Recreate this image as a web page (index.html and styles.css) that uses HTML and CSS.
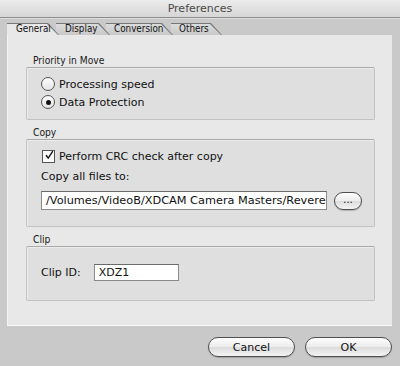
FILE: index.html
```html
<!DOCTYPE html>
<html lang="en">
<head>
  <meta charset="UTF-8" />
  <title>Preferences</title>
  <link rel="stylesheet" href="styles.css">
</head>
<body>
  <div class="window">
    <div class="titlebar">Preferences</div>

    <div class="tabs">
      <div class="tab active"><span>General</span></div>
      <div class="tab t2"><span>Display</span></div>
      <div class="tab t3"><span>Conversion</span></div>
      <div class="tab t4"><span>Others</span></div>
    </div>

    <div class="panel">
      <div class="group">
        <div class="group-label">Priority in Move</div>
        <div class="box box-priority">
          <label class="row">
            <span class="radio"></span> Processing speed
          </label>
          <label class="row">
            <span class="radio on"></span> Data Protection
          </label>
        </div>
      </div>

      <div class="group">
        <div class="group-label">Copy</div>
        <div class="box box-copy">
          <label class="row">
            <span class="check">
              <svg width="13" height="13" viewBox="0 0 13 13">
                <path d="M3 6.5 L5.5 10 L11 1.5" fill="none" stroke="#111" stroke-width="1.8" stroke-linecap="round" stroke-linejoin="round"/>
              </svg>
            </span>
            Perform CRC check after copy
          </label>
          <div class="plain">Copy all files to:</div>
          <div class="path-row">
            <div class="field path">/Volumes/VideoB/XDCAM Camera Masters/Reverend</div>
            <button class="pill small">...</button>
          </div>
        </div>
      </div>

      <div class="group">
        <div class="group-label">Clip</div>
        <div class="box box-clip">
          <div class="clip-row">
            <span>Clip ID:</span>
            <div class="field clip">XDZ1</div>
          </div>
        </div>
      </div>
    </div>

    <div class="actions">
      <button class="pill">Cancel</button>
      <button class="pill">OK</button>
    </div>
  </div>
</body>
</html>
```

FILE: styles.css
```css
* { margin: 0; padding: 0; box-sizing: border-box; }
body {
  width: 400px; height: 366px; overflow: hidden;
  background: #c9c9c9;
  font-family: "DejaVu Sans", "Liberation Sans", sans-serif;
  color: #111;
}

.window { display: flex; flex-direction: column; height: 366px; }

.titlebar {
  height: 18px;
  background: linear-gradient(#ececec, #d6d6d6);
  border-bottom: 1px solid #8e8e8e;
  box-shadow: 0 1px 0 #dcdcdc;
  text-align: center;
  font-size: 11px; line-height: 17px;
  color: #4a4a4a;
}

/* tabs */
.tabs { display: flex; padding: 5px 0 0 7px; height: 17px; }
.tab {
  position: relative;
  height: 12px;
  background: #777;
  clip-path: polygon(0 0, calc(100% - 11px) 0, 100% 100%, 0 100%);
  font-family: "DejaVu Sans Condensed", "DejaVu Sans", sans-serif;
  font-size: 9.8px; line-height: 12px;
  padding-left: 8px;
  white-space: nowrap;
}
.tab::before {
  content: '';
  position: absolute; top: 1px; left: 0; right: 1px; bottom: 0;
  background: linear-gradient(#dcdcdc, #c8c8c8);
  clip-path: polygon(0 0, calc(100% - 11px) 0, 100% 100%, 0 100%);
}
.tab span { position: relative; }
.tab.active { z-index: 4; width: 52px; padding-left: 9px; }
.tab.active::before { background: #e8e8e8; }
.tab.t2 { z-index: 3; margin-left: -3px; width: 54px; padding-left: 9px; }
.tab.t3 { z-index: 2; margin-left: -4px; width: 67px; }
.tab.t4 { z-index: 1; margin-left: -2px; width: 51px; }

/* panel */
.panel {
  margin: 0 8px 0 7px;
  height: 291px;
  background: #e8e8e8;
  border-bottom: 1px solid #fafafa;
  border-left: 1px solid #f4f4f4;
  padding: 20px 17px 0 18px;
  display: flex; flex-direction: column; gap: 7px;
}

.group-label {
  font-family: "DejaVu Sans Condensed", "DejaVu Sans", sans-serif;
  font-size: 10.2px; line-height: 12px;
  padding-left: 7px;
  color: #1a1a1a;
}

.box {
  background: #dfdfdf;
  border: 1px solid #c2c2c2;
  border-top-color: #a9a9a9;
  border-radius: 2px;
  box-shadow: inset 1px 1px 0 #ececec;
  padding-left: 14px;
  font-size: 11px;
}
.box-priority { height: 53px; padding-top: 7px; }
.box-copy { height: 88px; padding-top: 7px; }
.box-clip { height: 55px; padding-top: 17px; }

.row {
  display: flex; align-items: center; gap: 4px;
  height: 18px;
}

.radio {
  width: 14px; height: 14px; border-radius: 50%;
  border: 1px solid #555;
  background: linear-gradient(#fdfdfd, #e4e4e4);
  display: flex; align-items: center; justify-content: center;
}
.radio.on::after {
  content: ''; width: 5px; height: 5px; border-radius: 50%; background: #111;
}

.check {
  width: 13px; height: 13px;
  border: 1px solid #555;
  background: #fcfcfc;
  display: flex; align-items: center; justify-content: center;
  margin-left: 1px;
}
.check svg { margin-top: -2px; margin-left: 1px; }

.plain { margin-top: 4px; height: 16px; line-height: 16px; }

.path-row { display: flex; align-items: center; gap: 7px; margin-top: 6px; }

.field {
  background: #fff;
  border: 1px solid #8a8a8a;
  border-top-color: #6a6a6a;
  white-space: nowrap; overflow: hidden;
  padding-left: 4px;
}
.field.path { width: 286px; height: 19px; line-height: 17px; font-size: 11.3px; }
.field.clip { width: 85px; height: 17px; line-height: 15px; }

.clip-row { display: flex; align-items: center; gap: 13px; }

.pill {
  font-family: inherit;
  font-size: 11px; color: #111;
  border: 1px solid #4f4f4f;
  border-radius: 10px;
  background: linear-gradient(#fdfdfd, #ececec 50%, #dcdcdc 51%, #f4f4f4);
  box-shadow: 0 1px 1px rgba(0,0,0,0.2);
}
.pill.small {
  width: 28px; height: 18px;
  font-size: 10px; line-height: 10px;
  display: flex; align-items: center; justify-content: center;
  padding-bottom: 2px;
}

.actions {
  display: flex; justify-content: flex-end; gap: 10px;
  padding: 11px 8px 0 0;
}
.actions .pill { width: 87px; height: 20px; }
```
